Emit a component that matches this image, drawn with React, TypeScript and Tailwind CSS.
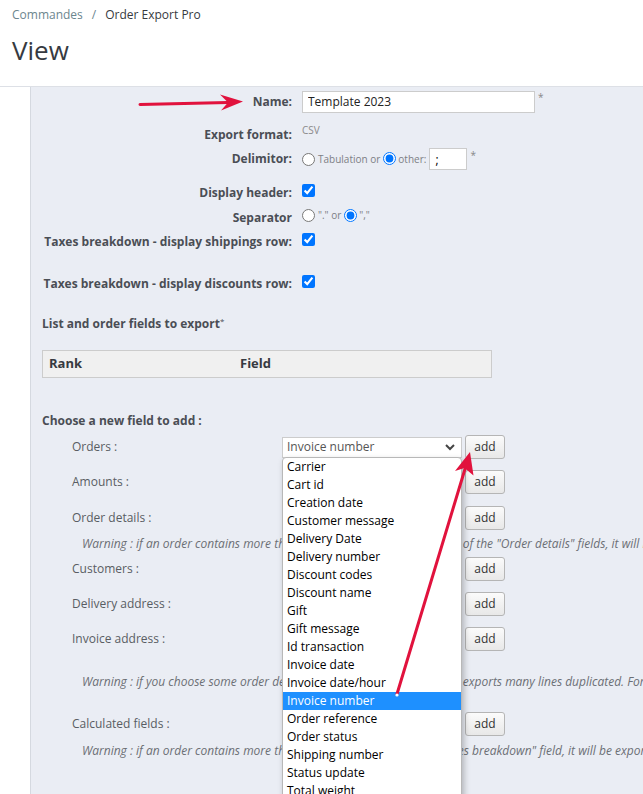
import React from 'react';

const dropdownItems = [
  'Carrier',
  'Cart id',
  'Creation date',
  'Customer message',
  'Delivery Date',
  'Delivery number',
  'Discount codes',
  'Discount name',
  'Gift',
  'Gift message',
  'Id transaction',
  'Invoice date',
  'Invoice date/hour',
  'Invoice number',
  'Order reference',
  'Order status',
  'Shipping number',
  'Status update',
  'Total weight',
];

function Label({ children }: { children: React.ReactNode }) {
  return (
    <div className="w-[271px] shrink-0 pr-[10px] text-right text-[12px] font-bold text-[#4a4e55] leading-[18px]">
      {children}
    </div>
  );
}

function Checkbox() {
  return <input type="checkbox" defaultChecked className="w-[13px] h-[13px] accent-[#0075ff]" />;
}

function Radio({ checked }: { checked?: boolean }) {
  return <input type="radio" readOnly checked={!!checked} className="w-[13px] h-[13px] accent-[#0075ff]" />;
}

function FakeSelect({ value }: { value: string }) {
  return (
    <div className="w-[180px] h-[21px] bg-white border border-[#ccc] flex items-center justify-between pl-[4px] pr-[6px] text-[12px] text-[#555]">
      <span>{value}</span>
      <svg width="10" height="7" viewBox="0 0 10 7">
        <polyline points="1,1 5,5 9,1" fill="none" stroke="#444" strokeWidth="2" />
      </svg>
    </div>
  );
}

function AddButton() {
  return (
    <button className="ml-[3px] w-[40px] h-[24px] border border-[#b5b5b5] rounded-[3px] bg-gradient-to-b from-[#fbfbfb] to-[#e8e8e8] text-[12px] text-[#333] leading-none">
      add
    </button>
  );
}

function FieldRow({ label, mt, children }: { label: string; mt: string; children?: React.ReactNode }) {
  return (
    <div className={`flex items-center h-[24px] ${mt}`}>
      <div className="w-[251px] pl-[41px] text-[12px] text-[#595d63]">{label}</div>
      <div className="relative">
        {children ?? <FakeSelect value="" />}
      </div>
      <AddButton />
    </div>
  );
}

function Warning({ mt, children }: { mt: string; children: React.ReactNode }) {
  return (
    <div className={`h-[18px] leading-[18px] pl-[51px] text-[12px] italic text-[#6c6f75] whitespace-nowrap ${mt}`}>
      {children}
    </div>
  );
}

export default function App() {
  return (
    <div className="relative w-full h-[794px] overflow-hidden bg-white font-['Open_Sans',sans-serif]">
      {/* page head */}
      <header className="h-[87px] border-b border-[#dde0e6] pl-[12px] pt-[6px]">
        <div className="text-[12px] leading-[18px] flex items-center">
          <span className="text-[#6c868e]">Commandes</span>
          <span className="mx-[9px] text-[#6c868e]">/</span>
          <span className="text-[#363a41]">Order Export Pro</span>
        </div>
        <h1 className="mt-[9px] text-[26px] leading-[34px] text-[#363a41]">View</h1>
      </header>

      <div className="flex">
        <div className="w-[30px] shrink-0" />
        <main className="flex-1 min-h-[710px] bg-[#eaedf4] border-l border-[#d5d9e0]">
          {/* settings */}
          <div className="flex items-center h-[23px] mt-[3px]">
            <Label>Name:</Label>
            <input
              defaultValue="Template 2023"
              className="w-[233px] h-[22px] bg-white border border-[#ccc] px-[5px] text-[12px] text-[#222] outline-none"
            />
            <span className="self-start ml-[3px] text-[10px] text-[#888]">*</span>
          </div>

          <div className="flex items-center h-[20px] mt-[12px]">
            <Label>Export format:</Label>
            <span className="self-start -mt-[2px] text-[10px] text-[#8a8a8a]">CSV</span>
          </div>

          <div className="flex items-center h-[22px] mt-[3px]">
            <Label>Delimitor:</Label>
            <Radio />
            <span className="ml-[3px] text-[10px] text-[#7d7f85]">Tabulation or</span>
            <span className="ml-[3px]">
              <Radio checked />
            </span>
            <span className="ml-[2px] text-[10px] text-[#7d7f85]">other:</span>
            <input
              defaultValue=";"
              className="ml-[3px] w-[38px] h-[22px] bg-white border border-[#ccc] px-[5px] text-[12px] outline-none"
            />
            <span className="self-start ml-[3px] text-[10px] text-[#888]">*</span>
          </div>

          <div className="flex items-center h-[18px] mt-[14px]">
            <Label>Display header:</Label>
            <span className="-mt-[6px] flex">
              <Checkbox />
            </span>
          </div>

          <div className="flex items-center h-[18px] mt-[7px]">
            <Label>Separator</Label>
            <span className="-mt-[6px] flex items-center">
              <Radio />
              <span className="ml-[3px] text-[10px] text-[#7d7f85]">"." or</span>
              <span className="ml-[3px] flex">
                <Radio checked />
              </span>
              <span className="ml-[2px] text-[10px] text-[#7d7f85]">","</span>
            </span>
          </div>

          <div className="flex items-center h-[18px] mt-[6px]">
            <Label>Taxes breakdown - display shippings row:</Label>
            <span className="-mt-[6px] flex">
              <Checkbox />
            </span>
          </div>

          <div className="flex items-center h-[18px] mt-[24px]">
            <Label>Taxes breakdown - display discounts row:</Label>
            <span className="-mt-[5px] flex">
              <Checkbox />
            </span>
          </div>

          {/* fields list */}
          <div className="mt-[23px] pl-[11px] text-[12px] font-bold text-[#4a4e55] leading-[16px]">
            List and order fields to export<sup className="text-[8px] font-normal">*</sup>
          </div>

          <div className="mt-[18px] ml-[11px] w-[450px] h-[28px] bg-[#f0f0f0] border border-[#ccc] flex items-center text-[13px] font-bold text-[#363a41]">
            <span className="pl-[6px] w-[197px]">Rank</span>
            <span>Field</span>
          </div>

          <div className="mt-[35px] pl-[11px] text-[12px] font-bold text-[#4a4e55] leading-[16px]">
            Choose a new field to add :
          </div>

          <FieldRow label="Orders :" mt="mt-[6px]">
            <FakeSelect value="Invoice number" />
            {/* open list */}
            <div className="absolute left-0 top-[20px] z-10 w-[180px] bg-white border border-[#b8b8b8] rounded-t-[4px] shadow-[2px_3px_6px_rgba(0,0,0,0.25)]">
              {dropdownItems.map((item) => (
                <div
                  key={item}
                  className={`h-[18px] leading-[18px] pl-[4px] text-[12px] whitespace-nowrap ${
                    item === 'Invoice number' ? 'bg-[#1e90ff] text-white' : 'text-black'
                  }`}
                >
                  {item}
                </div>
              ))}
            </div>
          </FieldRow>
          <FieldRow label="Amounts :" mt="mt-[11px]" />
          <FieldRow label="Order details :" mt="mt-[12px]" />
          <Warning mt="mt-[5px]">
            Warning : if an order contains more than one product and you pick one of the "Order details" fields, it will be exported on several lines.
          </Warning>
          <FieldRow label="Customers :" mt="mt-[4px]" />
          <FieldRow label="Delivery address :" mt="mt-[11px]" />
          <FieldRow label="Invoice address :" mt="mt-[11px]" />
          <Warning mt="mt-[22px]">
            Warning : if you choose some order details and addresses fields, the file exports many lines duplicated. For example, one line per product.
          </Warning>
          <FieldRow label="Calculated fields :" mt="mt-[21px]" />
          <Warning mt="mt-[6px]">
            Warning : if an order contains more than one tax and you pick the "Taxes breakdown" field, it will be exported on several lines.
          </Warning>
        </main>
      </div>

      {/* annotation arrows */}
      <svg
        className="absolute left-0 top-0 z-20 pointer-events-none"
        width="643"
        height="794"
        viewBox="0 0 643 794"
      >
        <line x1="140" y1="104.5" x2="228" y2="102.5" stroke="#e1123d" strokeWidth="3" strokeLinecap="round" />
        <polygon points="243,101.5 220,94.5 228,102.5 221,110.5" fill="#e1123d" />
        <line x1="397" y1="694" x2="465" y2="469" stroke="#e1123d" strokeWidth="3" strokeLinecap="round" />
        <polygon points="470,452 455,471 464.5,468 473.5,475.5" fill="#e1123d" />
        <circle cx="397" cy="695" r="1.6" fill="#fff" />
      </svg>
    </div>
  );
}
